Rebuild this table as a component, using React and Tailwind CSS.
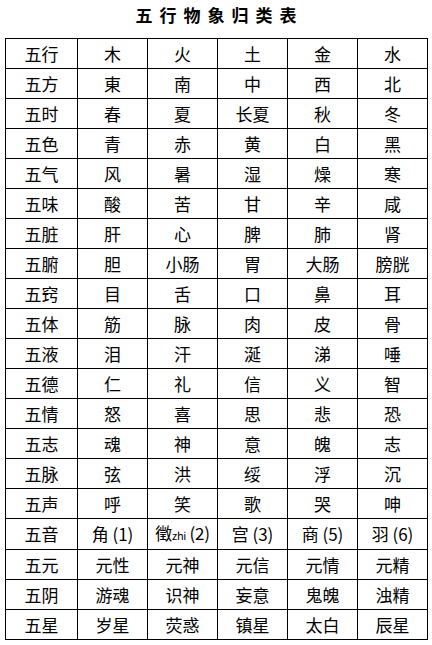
const rows = [
  ['五行', '木', '火', '土', '金', '水'],
  ['五方', '東', '南', '中', '西', '北'],
  ['五时', '春', '夏', '长夏', '秋', '冬'],
  ['五色', '青', '赤', '黄', '白', '黑'],
  ['五气', '风', '暑', '湿', '燥', '寒'],
  ['五味', '酸', '苦', '甘', '辛', '咸'],
  ['五脏', '肝', '心', '脾', '肺', '肾'],
  ['五腑', '胆', '小肠', '胃', '大肠', '膀胱'],
  ['五窍', '目', '舌', '口', '鼻', '耳'],
  ['五体', '筋', '脉', '肉', '皮', '骨'],
  ['五液', '泪', '汗', '涎', '涕', '唾'],
  ['五德', '仁', '礼', '信', '义', '智'],
  ['五情', '怒', '喜', '思', '悲', '恐'],
  ['五志', '魂', '神', '意', '魄', '志'],
  ['五脉', '弦', '洪', '绥', '浮', '沉'],
  ['五声', '呼', '笑', '歌', '哭', '呻'],
  ['五音', '角 (1)', 'ZHI', '宫 (3)', '商 (5)', '羽 (6)'],
  ['五元', '元性', '元神', '元信', '元情', '元精'],
  ['五阴', '游魂', '识神', '妄意', '鬼魄', '浊精'],
  ['五星', '岁星', '荧惑', '镇星', '太白', '辰星'],
];

function Cell({ v }) {
  if (v === 'ZHI') {
    return (
      <span className="whitespace-nowrap tracking-[-0.3px]">
        徵<span className="text-[11px]">zhi</span> (2)
      </span>
    );
  }
  return <span className="whitespace-nowrap">{v}</span>;
}

export default function App() {
  return (
    <div className="w-[432px] h-[645px] bg-white text-black font-['Noto_Sans_CJK_SC',sans-serif]">
      <h1 className="h-[38px] pt-[3px] text-center text-[17px] font-bold tracking-[7px] pl-[7px] leading-[24px]">
        五行物象归类表
      </h1>
      <table className="ml-[5px] border-collapse table-fixed w-[422px]">
        <colgroup>
          <col className="w-[72px]" />
          <col className="w-[70px]" />
          <col className="w-[70px]" />
          <col className="w-[70px]" />
          <col className="w-[70px]" />
          <col className="w-[70px]" />
        </colgroup>
        <tbody>
          {rows.map((r) => (
            <tr key={r[0]} className="h-[30px]">
              {r.map((v, i) => (
                <td key={i} className="border border-black p-0 text-center text-[17px] leading-[28px]">
                  <Cell v={v} />
                </td>
              ))}
            </tr>
          ))}
        </tbody>
      </table>
    </div>
  );
}
